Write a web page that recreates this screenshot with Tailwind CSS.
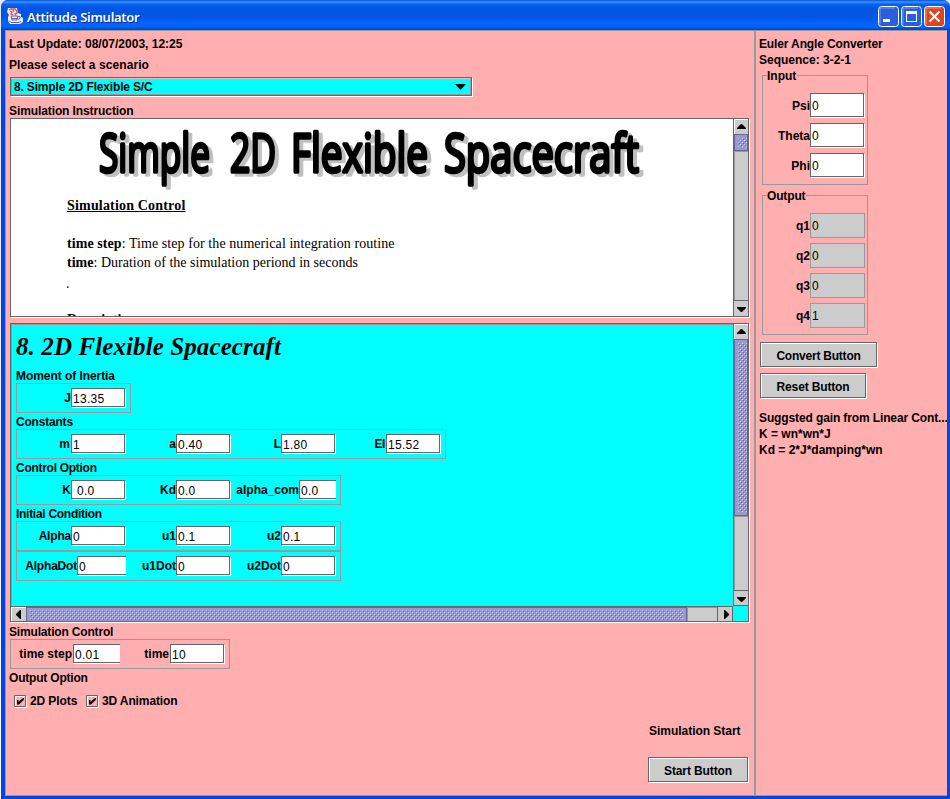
<!DOCTYPE html>
<html lang="en">
<head>
<meta charset="utf-8">
<title>Attitude Simulator</title>
<script src="https://cdn.jsdelivr.net/npm/@tailwindcss/browser@4"></script>
</head>
<body class="w-[950px] h-[799px] overflow-hidden bg-white font-['Liberation_Sans',sans-serif] text-[12px] leading-4 text-black">
<svg class="absolute w-0 h-0"><defs>
<pattern id="bump" width="4" height="4" patternUnits="userSpaceOnUse"><rect width="1" height="1" fill="#ccccff"/><rect x="2" y="2" width="1" height="1" fill="#ccccff"/><rect x="1" y="1" width="1" height="1" fill="#666699"/><rect x="3" y="3" width="1" height="1" fill="#666699"/></pattern>
</defs></svg>
<div class="flex h-[799px] pl-px bg-linear-to-b from-[#e8e8ee] to-white">
<div class="flex flex-col w-[949px] h-[799px] bg-[#0046e0] rounded-t-[7px] overflow-hidden">
  <!-- title bar -->
  <header class="flex items-center h-[30px] shrink-0 pl-[6px] pr-[5px] pt-[3px] bg-[linear-gradient(to_bottom,#0050d8_0,#3a94ff_2px,#0a64f0_4px,#0054e3_8px,#0055e5_17px,#0066ff_24px,#0062fa_27px,#0040c8_30px)]">
    <svg class="w-4 h-4 shrink-0 -mt-[2px]" viewBox="0 0 16 16">
      <path d="M1 0h9l1 5 3 1v3l2 1v4l-3 2H3l-2-3V9l1-2-2-3z" fill="#efeff8"/>
      <path d="M2 2l2-1h4l2 2v2L8 6l1 1M3 3l2 1-1 2 2 1M6 2l1 2" stroke="#e5484f" stroke-width="1.300" fill="none"/>
      <path d="M4 8h7M5 10.500h6M4 8l1 4h5l1-4M11 8.500h2v2l-2 1M2 12.500l2 2h7l3-1" stroke="#6a5a9c" stroke-width="1" fill="none"/>
    </svg>
    <h1 class="ml-1 grow text-white font-semibold text-[13px] font-['Noto_Sans',sans-serif] tracking-[-0.28px] [text-shadow:1px_1px_0_#0a2a90]">Attitude Simulator</h1>
    <div class="flex gap-[2px]">
      <svg class="w-[21px] h-[21px]" viewBox="0 0 21 21"><rect x=".5" y=".5" width="20" height="20" rx="3" fill="#2a5fdc" stroke="#fff"/><path d="M2 18V4q0-2 2-2h13" stroke="#6d9bf5" fill="none"/><path d="M5 13h7v3H5z" fill="#fff"/></svg>
      <svg class="w-[21px] h-[21px]" viewBox="0 0 21 21"><rect x=".5" y=".5" width="20" height="20" rx="3" fill="#2a5fdc" stroke="#fff"/><path d="M2 18V4q0-2 2-2h13" stroke="#6d9bf5" fill="none"/><path d="M5 5h11v11H5zM6 8v7h9V8z" fill="#fff" fill-rule="evenodd"/></svg>
      <svg class="w-[21px] h-[21px]" viewBox="0 0 21 21"><rect x=".5" y=".5" width="20" height="20" rx="3" fill="#dc4520" stroke="#fff"/><path d="M2 18V4q0-2 2-2h13" stroke="#f09a80" fill="none"/><path d="M5.500 5.500l10 10m0-10l-10 10" stroke="#fff" stroke-width="2.200"/></svg>
    </div>
  </header>
  <!-- client area -->
  <div class="flex h-[766px] ml-1 mr-[3px] bg-[#ffafaf] border-t border-l border-b border-[#999]">
    <main class="flex flex-col w-[748px] shrink-0 pl-[3px] pt-[5px]">
      <p class="h-4 font-bold">Last Update: 08/07/2003, 12:25</p>
      <p class="h-4 mt-[5px] font-bold tracking-[.08px]">Please select a scenario</p>
      <div class="mt-[4px] w-[462px] h-[19px] border border-[#666] shadow-[1px_1px_0_#fff] bg-[#00ffff] flex items-center ml-px">
        <div class="flex items-center grow h-[17px] border border-[#999] border-t-[#ccc] pl-[2px] pr-1">
          <span class="grow font-bold tracking-[-.17px]">8. Simple 2D Flexible S/C</span>
          <svg class="w-[11px] h-[6px]" viewBox="0 0 11 6"><path d="M0 0h11L6 5.500H5z"/></svg>
        </div>
      </div>
      <p class="h-4 mt-[6px] font-bold pt-px tracking-[-.1px]">Simulation Instruction</p>
      <!-- instruction pane -->
      <section class="ml-px w-[739px] h-[199px] border border-[#666] shadow-[1px_1px_0_#fff] bg-white flex">
        <div class="w-[722px] h-[197px] overflow-hidden font-['Liberation_Serif',serif] text-[14px] leading-[19px]">
          <svg class="block w-[722px] h-[76px] font-['Open_Sans',sans-serif] text-[53px] [filter:drop-shadow(4px_3px_0_#c0c0c0)]" viewBox="11 119 722 76">
            <g fill="#000" stroke="#000" stroke-width="3.600" stroke-linejoin="round">
              <text x="99" y="172" textLength="111" lengthAdjust="spacingAndGlyphs">Simple</text><text x="230" y="172" textLength="46" lengthAdjust="spacingAndGlyphs">2D</text><text x="291" y="172" textLength="137" lengthAdjust="spacingAndGlyphs">Flexible</text><text x="444" y="172" textLength="195" lengthAdjust="spacingAndGlyphs">Spacecraft</text>
            </g>
          </svg>
          <div class="pl-14">
            <p class="mt-[1px] font-bold underline tracking-[.18px]">Simulation Control</p>
            <p class="mt-[19px] tracking-[.07px]"><b>time step</b>: Time step for the numerical integration routine</p>
            <p class="tracking-[.01px]"><b>time</b>: Duration of the simulation periond in seconds</p>
            <p class="mt-[2px] -ml-px">.</p>
            <p class="mt-[17px] font-bold">Description</p>
          </div>
        </div>
        <div class="flex flex-col w-[15px] border-l border-[#666]">
          <div class="h-[15px] bg-[#ccc] border-t border-l border-t-white border-l-white flex items-center justify-center"><svg class="w-[9px] h-[5px] -mt-[2px]" viewBox="0 0 9 5"><path d="M4 0h1l4 4v1H0V4z"/></svg></div>
          <div class="h-[17px] bg-[#9999cc] border border-[#666699] p-[3px]"><svg class="block w-[10px] h-[9px]"><rect width="10" height="9" fill="url(#bump)"/></svg></div>
          <div class="grow bg-[#ccc] border-l border-t border-[#999]"></div>
          <div class="h-[16px] bg-[#ccc] border-t border-[#666] pt-[1px] flex items-center justify-center"><svg class="w-[9px] h-[5px]" viewBox="0 0 9 5"><path d="M4 5h1l4-4V0H0v1z"/></svg></div>
        </div>
      </section>
      <!-- parameter pane -->
      <section class="ml-px mt-[6px] w-[739px] h-[299px] border border-[#666] shadow-[1px_1px_0_#fff] bg-[#00ffff] flex flex-col">
        <div class="flex h-[282px]">
          <div class="w-[722px] border-t border-l border-[#999] pl-1">
            <h2 class="h-[42px] pt-[7px] text-[25px] leading-[30px] font-bold italic tracking-[.1px] font-['Liberation_Serif',serif]">8. 2D Flexible Spacecraft</h2>
            <p class="h-4 pt-px font-bold tracking-[-.06px]">Moment of Inertia</p>
            <div class="flex w-[115px] h-[30px] border border-[#999] p-1">
              <label class="flex w-[105px] justify-end"><b class="py-[2px]">J</b><span class="w-[54px] h-[19px] mr-px border border-[#666] shadow-[1px_1px_0_#fff] bg-white pl-px pt-[2px] leading-4 tracking-[.3px]">13.35</span></label>
            </div>
            <p class="h-4 pt-px font-bold tracking-[-.2px]">Constants</p>
            <div class="flex w-[430px] h-[30px] border border-[#999] p-1">
              <label class="flex w-[105px] justify-end"><b class="py-[2px] pr-px">m</b><span class="w-[54px] h-[19px] mr-px border border-[#666] shadow-[1px_1px_0_#fff] bg-white pl-px pt-[2px] leading-4 tracking-[.3px]">1</span></label>
              <label class="flex w-[105px] justify-end"><b class="py-[2px]">a</b><span class="w-[54px] h-[19px] mr-px border border-[#666] shadow-[1px_1px_0_#fff] bg-white pl-px pt-[2px] leading-4 tracking-[.3px]">0.40</span></label>
              <label class="flex w-[105px] justify-end"><b class="py-[2px]">L</b><span class="w-[54px] h-[19px] mr-px border border-[#666] shadow-[1px_1px_0_#fff] bg-white pl-px pt-[2px] leading-4 tracking-[.3px]">1.80</span></label>
              <label class="flex w-[105px] justify-end"><b class="py-[2px] pr-px tracking-[-.4px]">EI</b><span class="w-[54px] h-[19px] mr-px border border-[#666] shadow-[1px_1px_0_#fff] bg-white pl-px pt-[2px] leading-4 tracking-[.3px]">15.52</span></label>
            </div>
            <p class="h-4 pt-px font-bold tracking-[-.28px]">Control Option</p>
            <div class="flex w-[325px] h-[30px] border border-[#999] p-1">
              <label class="flex w-[105px] justify-end"><b class="py-[2px]">K</b><span class="w-[54px] h-[19px] mr-px border border-[#666] shadow-[1px_1px_0_#fff] bg-white pl-[5px] pt-[2px] leading-4 tracking-[.3px]">0.0</span></label>
              <label class="flex w-[105px] justify-end"><b class="py-[2px]">Kd</b><span class="w-[54px] h-[19px] mr-px border border-[#666] shadow-[1px_1px_0_#fff] bg-white pl-px pt-[2px] leading-4 tracking-[.3px]">0.0</span></label>
              <label class="flex w-[105px] justify-end"><b class="py-[2px]">alpha_com</b><span class="w-[37px] h-[19px] border border-r-0 border-[#666] shadow-[0_1px_0_#fff] bg-white pl-px pt-[2px] leading-4 tracking-[.3px]">0.0</span></label>
            </div>
            <p class="h-4 pt-px font-bold tracking-[-.28px]">Initial Condition</p>
            <div class="flex w-[325px] h-[30px] border border-[#999] p-1">
              <label class="flex w-[105px] justify-end"><b class="py-[2px] tracking-[-.2px]">Alpha</b><span class="w-[54px] h-[19px] mr-px border border-[#666] shadow-[1px_1px_0_#fff] bg-white pl-px pt-[2px] leading-4 tracking-[.3px]">0</span></label>
              <label class="flex w-[105px] justify-end"><b class="py-[2px]">u1</b><span class="w-[54px] h-[19px] mr-px border border-[#666] shadow-[1px_1px_0_#fff] bg-white pl-px pt-[2px] leading-4 tracking-[.3px]">0.1</span></label>
              <label class="flex w-[105px] justify-end"><b class="py-[2px]">u2</b><span class="w-[54px] h-[19px] mr-px border border-[#666] shadow-[1px_1px_0_#fff] bg-white pl-px pt-[2px] leading-4 tracking-[.3px]">0.1</span></label>
            </div>
            <div class="flex w-[325px] h-[30px] border border-[#999] p-1">
              <label class="flex w-[105px] justify-end"><b class="py-[2px] tracking-[-.2px]">AlphaDot</b><span class="w-[49px] h-[19px] border border-r-0 border-[#666] shadow-[0_1px_0_#fff] bg-white pl-px pt-[2px] leading-4 tracking-[.3px]">0</span></label>
              <label class="flex w-[105px] justify-end"><b class="py-[2px]">u1Dot</b><span class="w-[54px] h-[19px] mr-px border border-[#666] shadow-[1px_1px_0_#fff] bg-white pl-px pt-[2px] leading-4 tracking-[.3px]">0</span></label>
              <label class="flex w-[105px] justify-end"><b class="py-[2px]">u2Dot</b><span class="w-[54px] h-[19px] mr-px border border-[#666] shadow-[1px_1px_0_#fff] bg-white pl-px pt-[2px] leading-4 tracking-[.3px]">0</span></label>
            </div>
          </div>
          <div class="flex flex-col w-[15px] border-l border-[#666]">
            <div class="h-[15px] bg-[#ccc] border-t border-l border-t-white border-l-white flex items-center justify-center"><svg class="w-[9px] h-[5px] -mt-[2px]" viewBox="0 0 9 5"><path d="M4 0h1l4 4v1H0V4z"/></svg></div>
            <div class="h-[177px] bg-[#9999cc] border border-[#666699] p-[3px]"><svg class="block w-[10px] h-[169px]"><rect width="10" height="169" fill="url(#bump)"/></svg></div>
            <div class="grow bg-[#ccc] border-l border-t border-[#999]"></div>
            <div class="h-[16px] bg-[#ccc] border-t border-b border-[#666] pt-[2px] flex items-center justify-center"><svg class="w-[9px] h-[5px]" viewBox="0 0 9 5"><path d="M4 5h1l4-4V0H0v1z"/></svg></div>
          </div>
        </div>
        <div class="flex h-[15px] w-[722px] border-t border-[#666]">
          <div class="w-[15px] bg-[#ccc] border-l border-t border-white flex items-center justify-center"><svg class="w-[5px] h-[9px] -ml-[2px]" viewBox="0 0 5 9"><path d="M0 4v1l4 4h1V0H4z"/></svg></div>
          <div class="w-[661px] bg-[#9999cc] border border-[#666699] border-b-0 px-[3px] py-[2px]"><svg class="block w-[653px] h-[10px]"><rect width="653" height="10" fill="url(#bump)"/></svg></div>
          <div class="grow bg-[#ccc] border-l border-t border-[#999]"></div>
          <div class="w-[16px] bg-[#ccc] border-l border-r border-[#666] flex items-center justify-center"><svg class="w-[5px] h-[9px] ml-[2px]" viewBox="0 0 5 9"><path d="M5 4v1L1 9H0V0h1z"/></svg></div>
        </div>
      </section>
      <p class="h-4 mt-[1px] pt-px font-bold tracking-[-.17px]">Simulation Control</p>
      <div class="flex ml-px w-[220px] h-[30px] border border-[#999] p-1">
        <label class="flex w-[105px] justify-end"><b class="py-[2px] pr-px whitespace-nowrap">time step</b><span class="w-[47px] h-[19px] border border-r-0 border-[#666] shadow-[0_1px_0_#fff] bg-white pl-px pt-[2px] leading-4 tracking-[.3px]">0.01</span></label>
        <label class="flex w-[105px] justify-end"><b class="py-[2px] pr-px">time</b><span class="w-[54px] h-[19px] mr-px border border-[#666] shadow-[1px_1px_0_#fff] bg-white pl-px pt-[2px] leading-4 tracking-[.3px]">10</span></label>
      </div>
      <p class="h-4 mt-[1px] font-bold tracking-[-.2px]">Output Option</p>
      <div class="flex mt-[7px] ml-[5px] h-4 font-bold items-center">
        <svg class="w-[13px] h-[13px] mr-[3px]" viewBox="0 0 13 13"><path d="M1.500 1.500h11v11h-11z" fill="none" stroke="#fff"/><path d="M.5.500h11v11H.5z" fill="none" stroke="#666"/><path d="M3 5h1.500v2L9 3h1v1.500L5 9.500H3z"/></svg><span class="w-[56px] tracking-[-.1px]">2D Plots</span>
        <svg class="w-[13px] h-[13px] mr-[3px]" viewBox="0 0 13 13"><path d="M1.500 1.500h11v11h-11z" fill="none" stroke="#fff"/><path d="M.5.500h11v11H.5z" fill="none" stroke="#666"/><path d="M3 5h1.500v2L9 3h1v1.500L5 9.500H3z"/></svg><span class="tracking-[-.12px]">3D Animation</span>
      </div>
      <div class="flex flex-col ml-[639px] mt-[14px] font-bold">
        <span class="h-4 pl-px tracking-[-.03px]">Simulation Start</span>
        <div class="mt-[18px] w-[100px] h-[25px] border border-[#666] bg-[#ccc] shadow-[1px_1px_0_#fff,inset_1px_1px_0_#fff] text-center leading-[26px] tracking-[-.12px]">Start Button</div>
      </div>
    </main>
    <div class="w-[2px] shrink-0 bg-[#999]"></div>
    <aside class="grow pl-[3px] pt-[5px] font-bold overflow-hidden whitespace-nowrap">
      <p class="h-4 tracking-[-.13px]">Euler Angle Converter</p>
      <p class="h-4">Sequence: 3-2-1</p>
      <div class="ml-[3px] mt-[7px] w-[106px] h-[110px] border border-[#999] pr-[2px]">
        <div class="-mt-2 ml-1 h-4 pr-px w-fit bg-[#ffafaf]">Input</div>
        <div class="flex flex-col gap-[5px] pt-[9px]">
          <label class="flex h-[25px] justify-end"><b class="pt-[5px]">Psi</b><span class="w-[54px] h-[24px] mr-px border border-[#666] shadow-[1px_1px_0_#fff] bg-white pl-px pt-1 font-normal">0</span></label>
          <label class="flex h-[25px] justify-end"><b class="pt-[5px]">Theta</b><span class="w-[54px] h-[24px] mr-px border border-[#666] shadow-[1px_1px_0_#fff] bg-white pl-px pt-1 font-normal">0</span></label>
          <label class="flex h-[25px] justify-end"><b class="pt-[5px]">Phi</b><span class="w-[54px] h-[24px] mr-px border border-[#666] shadow-[1px_1px_0_#fff] bg-white pl-px pt-1 font-normal">0</span></label>
        </div>
      </div>
      <div class="ml-[3px] mt-[10px] w-[106px] h-[140px] border border-[#999] pr-[2px]">
        <div class="-mt-2 ml-1 h-4 pr-px w-fit tracking-[-.15px] bg-[#ffafaf]">Output</div>
        <div class="flex flex-col gap-[5px] pt-[9px]">
          <label class="flex h-[25px] justify-end"><b class="pt-[5px]">q1</b><span class="w-[55px] h-[25px] border border-[#999] bg-[#ccc] pl-px pt-1 font-normal">0</span></label>
          <label class="flex h-[25px] justify-end"><b class="pt-[5px]">q2</b><span class="w-[55px] h-[25px] border border-[#999] bg-[#ccc] pl-px pt-1 font-normal">0</span></label>
          <label class="flex h-[25px] justify-end"><b class="pt-[5px]">q3</b><span class="w-[55px] h-[25px] border border-[#999] bg-[#ccc] pl-px pt-1 font-normal">0</span></label>
          <label class="flex h-[25px] justify-end"><b class="pt-[5px]">q4</b><span class="w-[55px] h-[25px] border border-[#999] bg-[#ccc] pl-px pt-1 font-normal">1</span></label>
        </div>
      </div>
      <div class="ml-px mt-[7px] w-[117px] h-[25px] border border-[#666] bg-[#ccc] shadow-[1px_1px_0_#fff,inset_1px_1px_0_#fff] text-center leading-[26px] tracking-[-.22px]">Convert Button</div>
      <div class="ml-px mt-[6px] w-[106px] h-[25px] border border-[#666] bg-[#ccc] shadow-[1px_1px_0_#fff,inset_1px_1px_0_#fff] text-center leading-[26px] tracking-[-.15px]">Reset Button</div>
      <p class="h-4 mt-[12px] tracking-[-.12px]">Suggsted gain from Linear Cont...</p>
      <p class="h-4">K = wn*wn*J</p>
      <p class="h-4">Kd = 2*J*damping*wn</p>
    </aside>
  </div>
</div>
</div>
</body>
</html>
